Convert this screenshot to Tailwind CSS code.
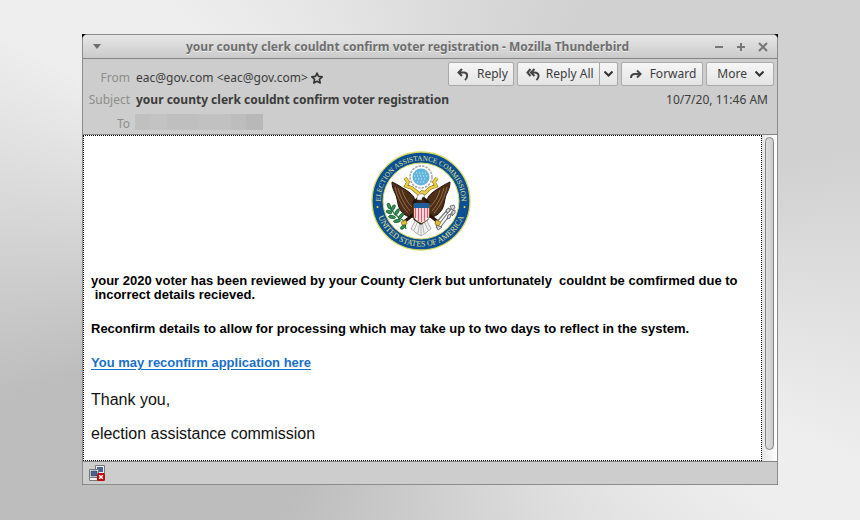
<!DOCTYPE html>
<html lang="en">
<head>
    <meta charset="UTF-8">
    <meta name="viewport" content="width=device-width, initial-scale=1.0">
    <title>Mozilla Thunderbird</title>
    <script src="https://cdn.jsdelivr.net/npm/@tailwindcss/browser@4"></script>
</head>
<body class="min-h-screen px-[82px] py-[34px] font-['Noto_Sans',sans-serif] text-[12px] text-[#3c3c3c] bg-[conic-gradient(#dcdcdc_0deg,#d1d1d1_32deg,#d1d1d1_75deg,#eeeeee_116deg,#eeeeee_125deg,#bdbdbd_210deg,#bdbdbd_252deg,#eeeeee_298deg,#eeeeee_313deg,#dcdcdc_360deg)]">
    <div class="bg-black">
        <div class="rounded-t-[5px] border border-[#8c8c8c] bg-[#cdcdcd]">
            <!-- Title bar -->
            <div class="flex h-6 items-center rounded-t-[4px] border-b border-[#858585] bg-linear-to-b from-[#e6e6e6] to-[#cbcbcb] pr-[9px] pl-[10px] text-[#6e6e6e]">
                <button aria-label="Window menu">
                    <svg class="h-[5px] w-[8px]" viewBox="0 0 8 5" fill="#6e6e6e"><path d="M0 0h8L4 5z"/></svg>
                </button>
                <h1 class="flex-1 text-center font-bold [text-shadow:0_1px_0_#f0f0f0]">your county clerk couldnt confirm voter registration - Mozilla Thunderbird</h1>
                <div class="flex gap-3">
                    <button aria-label="Minimize"><svg class="size-[10px]" viewBox="0 0 10 10" stroke="#777" stroke-width="2"><path d="M1 5h8"/></svg></button>
                    <button aria-label="Maximize"><svg class="size-[10px]" viewBox="0 0 10 10" stroke="#777" stroke-width="2"><path d="M1 5h8M5 1v8"/></svg></button>
                    <button aria-label="Close"><svg class="size-[10px]" viewBox="0 0 10 10" stroke="#777" stroke-width="2"><path d="M1 1l8 8M9 1L1 9"/></svg></button>
                </div>
            </div>

            <!-- Message header -->
            <div class="flex h-[76px] justify-between border-b border-[#858585] pt-[3px] pr-[3px] whitespace-nowrap">
                <dl class="grid min-w-0 grid-cols-[47px_minmax(0,1fr)] content-start gap-x-[5px] pt-[5px] leading-[22px]">
                    <dt class="text-right text-[#8e8e8a]">From</dt>
                    <dd class="flex items-center pl-px">eac@gov.com &lt;eac@gov.com&gt;
                        <svg class="ml-[3px] size-3" viewBox="0 0 12 12" fill="none" stroke="#333" stroke-width="1.6" stroke-linejoin="round"><path d="M6 1l1.500 3.400 3.700.4-2.800 2.500.8 3.700L6 9.300 2.800 11l.8-3.700L.8 4.800l3.700-.4z"/></svg>
                    </dd>
                    <dt class="text-right text-[#8e8e8a]">Subject</dt>
                    <dd class="pl-px font-bold">your county clerk couldnt confirm voter registration</dd>
                    <dt class="pt-[2px] text-right text-[#8e8e8a]">To</dt>
                    <dd class="flex">
                        <div class="mt-[3px] h-4 w-[128px] bg-[linear-gradient(90deg,#c0c0c0_12%,#c3c3c3_12%_25%,#bfbfbf_25%_50%,#c1c1c1_50%_75%,#bdbdbd_75%_87%,#b8b8b8_87%)]"></div>
                    </dd>
                </dl>
                <div class="flex shrink-0 flex-col items-end">
                    <div class="flex gap-[3px]">
                        <button class="flex h-6 items-center gap-2 rounded-[2px] border border-[#a9a9a9] bg-linear-to-b from-[#f6f6f6] to-[#e4e4e4] pr-[5px] pl-2">
                            <svg class="h-[13px] w-[12px]" viewBox="0 0 12 13" fill="none" stroke="#444" stroke-width="2"><path d="M5 1L1.500 4.500 5 8M2 4.500h5c4 0 4 5 1 7.500"/></svg>
                            Reply
                        </button>
                        <div class="flex h-6 rounded-[2px] border border-[#a9a9a9] bg-linear-to-b from-[#f6f6f6] to-[#e4e4e4]">
                            <button class="flex items-center gap-[6px] border-r border-[#a9a9a9] pr-[5px] pl-2">
                                <svg class="h-[13px] w-[14px]" viewBox="0 0 14 13" fill="none" stroke="#444" stroke-width="2"><path d="M4.500 1L1.500 4.500l3 3.500M8.500 1L5 4.500 8.500 8M5.500 4.500h3c5 0 5 5 2 7.500"/></svg>
                                Reply All
                            </button>
                            <button aria-label="More reply options" class="flex w-[17px] items-center justify-center">
                                <svg class="h-[6px] w-[9px]" viewBox="0 0 9 6" fill="none" stroke="#333" stroke-width="2"><path d="M.5.5l4 4 4-4"/></svg>
                            </button>
                        </div>
                        <button class="flex h-6 items-center gap-2 rounded-[2px] border border-[#a9a9a9] bg-linear-to-b from-[#f6f6f6] to-[#e4e4e4] pr-[6px] pl-2">
                            <svg class="h-[10px] w-[12px]" viewBox="0 0 12 10" fill="none" stroke="#444" stroke-width="2"><path d="M1 9c0-3 1-4 4-4h5M7 1.500L10.500 5 7 8.500"/></svg>
                            Forward
                        </button>
                        <button class="flex h-6 items-center gap-2 rounded-[2px] border border-[#a9a9a9] bg-linear-to-b from-[#f6f6f6] to-[#e4e4e4] pr-[9px] pl-[10px]">
                            More
                            <svg class="h-[6px] w-[9px]" viewBox="0 0 9 6" fill="none" stroke="#333" stroke-width="2"><path d="M.5.5l4 4 4-4"/></svg>
                        </button>
                    </div>
                    <time class="mt-[3px] pr-[6px] leading-[22px]">10/7/20, 11:46 AM</time>
                </div>
            </div>

            <!-- Message body -->
            <div class="flex border-b border-[#858585] bg-white">
                <main class="flex-1 border border-dotted border-black pt-[15px] pr-[10px] pb-[17px] pl-[7px] font-['Liberation_Sans',Arial,sans-serif] text-[16px] leading-[18px] text-[#111]">
                    <svg class="mx-auto size-[100px]" viewBox="0 0 100 100" role="img" aria-label="Seal">
                        <defs>
                            <path id="top-arc" d="M12.400 65.200A40.500 40.500 0 1 1 87.600 65.200"/>
                            <path id="bottom-arc" d="M4.500 50a45.500 45.500 0 0 0 91 0"/>
                        </defs>
                        <circle cx="50" cy="50" r="49" fill="#0a4f93" stroke="#d8d860" stroke-width="1.300"/>
                        <circle cx="50" cy="50" r="38" fill="#fff" stroke="#d8d860"/>
                        <g fill="#e8e48a" font-family="Liberation Serif, serif" text-anchor="middle">
                            <text font-size="7.200"><textPath href="#top-arc" startOffset="50%">ELECTION ASSISTANCE COMMISSION</textPath></text>
                            <text font-size="8"><textPath href="#bottom-arc" startOffset="50%">UNITED STATES OF AMERICA</textPath></text>
                        </g>
                        <circle cx="6.500" cy="56" r="1" fill="#f0e040"/>
                        <circle cx="93.500" cy="56" r="1" fill="#f0e040"/>
                        <!-- glory -->
                        <circle cx="50" cy="26" r="11" fill="#fff" stroke="#a8a8a8" stroke-width="1.500" stroke-dasharray="2.500 1"/>
                        <circle cx="50" cy="26" r="8.500" fill="#62b4dd"/>
                        <path d="M45 22h10M43 25h14M44 28h12M46 31h8" stroke="#d5eefa" stroke-width="1.200" stroke-dasharray="1.200 1.800"/>
                        <!-- scroll -->
                        <path d="M34 27l3 4-2 4 6 2 6 5 2 4M66 27l-3 4 2 4-6 2-5 5-3-1-4 4" fill="none" stroke="#8a7418" stroke-width="3.600"/>
                        <path d="M34 27l3 4-2 4 6 2 6 5 2 4M66 27l-3 4 2 4-6 2-5 5-3-1-4 4" fill="none" stroke="#ecd04a" stroke-width="2.400"/>
                        <!-- tail -->
                        <path d="M46 66l-6 12 3 2 2 2 2 1 3 2 3-2 2-1 2-2 3-2-6-12z" fill="#f2f2f2" stroke="#777" stroke-width=".6"/>
                        <path d="M47 70l-4 9M49 70l-2 12M50 70v14M51 70l2 12M53 70l4 9" stroke="#888" stroke-width=".6"/>
                        <!-- wings and body -->
                        <path d="M21 31c5 2 9 5 14 8 6 4 9 7 9 12v15c-6 1-11-2-14-6-3-4-3-8-4-12-1-6-5-9-5-17zM79 31c-5 2-9 5-14 8-6 4-9 7-9 12v15c6 1 11-2 14-6 3-4 3-8 4-12 1-6 5-9 5-17z" fill="#4d2e18" stroke="#24150b"/>
                        <path d="M24 36c2 9 6 18 13 26M27 37c2 8 6 16 12 23M31 39c2 7 5 12 10 17M76 36c-2 9-6 18-13 26M73 37c-2 8-6 16-12 23M69 39c-2 7-5 12-10 17" fill="none" stroke="#a57c50" stroke-width=".8"/>
                        <path d="M43 51l5-4 4 0 5 4-1 17-6 4-6-4zM43 63l-10 8M57 63l10 8" fill="#3b2413" stroke="#24150b" stroke-width="3"/>
                        <path d="M46 47c0-3 3-5 6-4l2 2-3 2v2h-5z" fill="#fff" stroke="#555" stroke-width=".5"/>
                        <!-- shield -->
                        <path d="M43 53h15v12c0 3-3 5-7.500 7-4.500-2-7.500-4-7.500-7z" fill="#fff" stroke="#d4c05a" stroke-width=".5"/>
                        <path d="M44.500 57v10M47.500 57v13M50.500 57v14M53.500 57v13M56.500 57v10" stroke="#e05a70" stroke-width="1.500"/>
                        <path d="M43 52h15v5H43z" fill="#1c5f9c"/>
                        <!-- olive branch -->
                        <path d="M18 54c3 8 8 12 15 16l2 8" fill="none" stroke="#267a3c" stroke-width="1.200"/>
                        <g fill="#319150" stroke="#176035" stroke-width=".8">
                            <ellipse cx="18" cy="55" rx="3" ry="1.500" transform="rotate(70 18 55)"/>
                            <ellipse cx="22" cy="57" rx="3.500" ry="1.500" transform="rotate(-60 22 57)"/>
                            <ellipse cx="18" cy="61" rx="3" ry="1.500" transform="rotate(20 18 61)"/>
                            <ellipse cx="26" cy="61" rx="3.500" ry="1.500" transform="rotate(-60 26 61)"/>
                            <ellipse cx="21" cy="66" rx="3.500" ry="1.500" transform="rotate(10 21 66)"/>
                            <ellipse cx="30" cy="65" rx="3.500" ry="1.500" transform="rotate(-50 30 65)"/>
                            <ellipse cx="26" cy="70" rx="3.500" ry="1.500" transform="rotate(-10 26 70)"/>
                            <ellipse cx="32" cy="76" rx="3" ry="1.500" transform="rotate(-40 32 76)"/>
                        </g>
                        <!-- arrows -->
                        <path d="M65 77l17-22M68 78l15-19M64 73l14-16" stroke="#777" stroke-width="1.200"/>
                        <path d="M79 55l4-1 1 3-3 2zM81 60l3-1 0 3-3 3zM75 59l3-2 1 3-3 2zM77 64l3-1-1 4-3 1zM65 74l6 2-4 3z" fill="#ddd" stroke="#555" stroke-width=".8"/>
                        <path d="M30 71l5-2 1 4-5 1zM65 69l5 2-2 4-4-2z" fill="#e2bd35" stroke="#86681a" stroke-width=".6"/>
                    </svg>
                    <div class="mt-[23px] text-[13px] leading-[14px] font-bold text-black">
                        <p class="whitespace-pre-wrap">your 2020 voter has been reviewed by your County Clerk but unfortunately  couldnt be comfirmed due to
 incorrect details recieved.</p>
                        <p class="mt-5">Reconfirm details to allow for processing which may take up to two days to reflect in the system.</p>
                        <p class="mt-5"><a href="#" class="text-[#1a6fca] underline underline-offset-2">You may reconfirm application here</a></p>
                    </div>
                    <p class="mt-[21px]">Thank you,</p>
                    <p class="mt-4">election assistance commission</p>
                </main>
                <!-- Scrollbar -->
                <div class="flex w-[15px] bg-linear-to-r from-[#e4e4e4] to-white px-[3px] pt-[2px] pb-[11px]">
                    <div class="flex-1 rounded-full border border-[#858585] bg-linear-to-r from-[#e0e0e0] to-[#cacaca]"></div>
                </div>
            </div>

            <!-- Status bar -->
            <div class="flex h-[22px] items-center px-[6px]">
                <svg class="size-4" viewBox="0 0 16 16" role="img" aria-label="Offline">
                    <path d="M6.500.5h9v8h-9z" fill="#eee" stroke="#777"/>
                    <path d="M8 2h6v5H8z" fill="#4a6490"/>
                    <path d="M.5 4.500h9v11h-9z" fill="#f2f2f2" stroke="#777"/>
                    <path d="M2 6h6v5H2z" fill="#4a6490" stroke="#2d3c5c" stroke-width=".6"/>
                    <path d="M0 12.500h9" stroke="#777"/>
                    <rect x="8" y="8" width="8" height="8" rx="1.500" fill="#b80f0f"/>
                    <path d="M10.200 10.200l3.600 3.600M13.800 10.200l-3.600 3.600" stroke="#fff" stroke-width="1.500"/>
                </svg>
            </div>
        </div>
    </div>
</body>
</html>
